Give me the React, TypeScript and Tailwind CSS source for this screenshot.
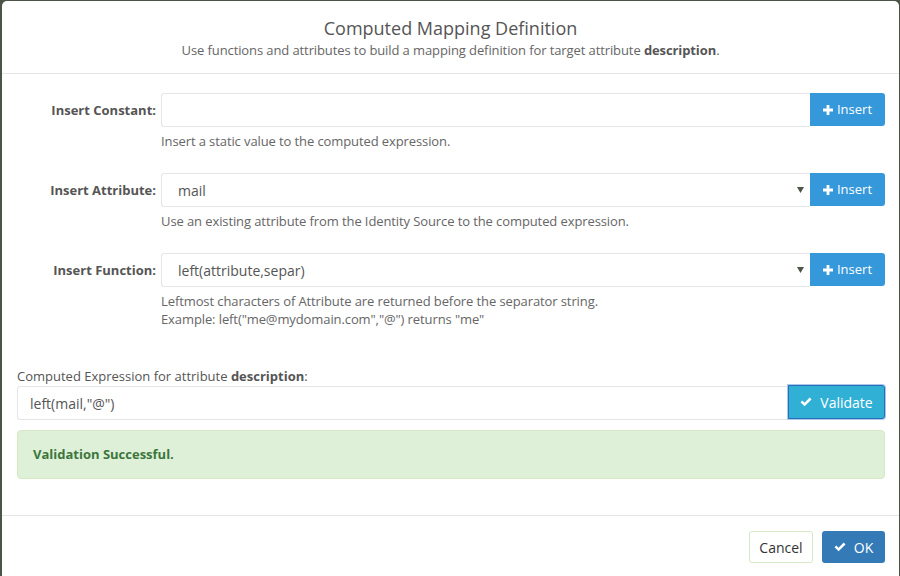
import React from "react";

const font = { fontFamily: '"Open Sans", "Liberation Sans", sans-serif' };

function Plus() {
  return (
    <svg width="10" height="10" viewBox="0 0 10 10" className="inline-block">
      <path d="M3.6 0h2.8v3.6H10v2.8H6.4V10H3.6V6.4H0V3.6h3.6z" fill="#fff" />
    </svg>
  );
}

function Check() {
  return (
    <svg width="12" height="10" viewBox="0 0 12 10" className="inline-block">
      <path d="M0.5 5.2 2.3 3.4 4.6 5.7 9.7 0.6 11.5 2.4 4.6 9.3z" fill="#fff" />
    </svg>
  );
}

function Arrow() {
  return (
    <svg width="7" height="6" viewBox="0 0 7 6">
      <path d="M0 0h7L3.5 6z" fill="#4a5646" />
    </svg>
  );
}

function InsertButton() {
  return (
    <button className="flex h-[33px] w-[75px] items-center justify-center gap-[4px] rounded-r-[3px] bg-[#3498db] text-[13px] text-white">
      <Plus />
      <span>Insert</span>
    </button>
  );
}

function Row({
  label,
  value,
  select,
  help,
}: {
  label: string;
  value?: string;
  select?: boolean;
  help: React.ReactNode;
}) {
  return (
    <div className="flex">
      <div className="w-[144px] pt-[8px] pr-[5px] text-right text-[13px] font-bold text-[#555]">
        {label}
      </div>
      <div className="flex-1">
        <div className="flex">
          <div className="flex h-[34px] flex-1 items-center justify-between rounded-l-[3px] border border-r-0 border-[#e6e6e6] pl-[16px] pr-[6px] text-[14px] text-[#555]">
            <span>{value}</span>
            {select && <Arrow />}
          </div>
          <InsertButton />
        </div>
        <div className="mt-[5px] text-[13px] leading-[18px] tracking-[-0.1px] text-[#666]">{help}</div>
      </div>
    </div>
  );
}

export default function App() {
  return (
    <div className="h-[576px] w-[900px] overflow-hidden bg-[#4b5447] pl-[2px] pt-[1px]" style={font}>
      <div className="h-[600px] w-[897px] rounded-[5px] bg-white">
        <div className="flex h-[73px] flex-col items-center border-b border-[#e5e5e5] pt-[15px]">
          <div className="text-[18px] leading-[24px] text-[#555]">Computed Mapping Definition</div>
          <div className="mt-[1px] text-[13px] leading-[18px] tracking-[-0.1px] text-[#666]">
            Use functions and attributes to build a mapping definition for target attribute{" "}
            <b className="text-[#555]">description</b>.
          </div>
        </div>
        <div className="pl-[15px] pr-[14px] pt-[19px]">
          <div className="flex flex-col gap-[23px]">
            <Row label="Insert Constant:" help="Insert a static value to the computed expression." />
            <Row
              label="Insert Attribute:"
              value="mail"
              select
              help="Use an existing attribute from the Identity Source to the computed expression."
            />
            <Row
              label="Insert Function:"
              value="left(attribute,separ)"
              select
              help={
                <>
                  <div>Leftmost characters of Attribute are returned before the separator string.</div>
                  <div>Example: left("me@mydomain.com","@") returns "me"</div>
                </>
              }
            />
          </div>
          <div className="mt-[39px] text-[13px] leading-[18px] text-[#555]">
            Computed Expression for attribute <b>description</b>:
          </div>
          <div className="mt-[1px] flex">
            <div className="flex h-[34px] flex-1 items-center rounded-l-[3px] border border-r-0 border-[#e6e6e6] pl-[12px] text-[14px] text-[#555]">
              left(mail,"@")
            </div>
            <button className="flex h-[34px] w-[97px] -translate-y-[1px] items-center justify-center gap-[8px] rounded-r-[3px] border border-[#2a6cb6] bg-[#31b0d5] text-[14px] text-white shadow-[0_0_0_1px_#a9c8f0]">
              <Check />
              <span>Validate</span>
            </button>
          </div>
          <div className="mt-[10px] flex h-[49px] items-center rounded-[4px] border border-[#d6e9c6] bg-[#dff0d8] pl-[15px] text-[13px] font-bold text-[#3c763d]">
            Validation Successful.
          </div>
        </div>
        <div className="mt-[36px] flex justify-end gap-[9px] border-t border-[#e5e5e5] pr-[14px] pt-[15px]">
          <button className="h-[32px] w-[64px] rounded-[3px] border border-[#d6e9c6] bg-white text-[14px] text-[#333]">
            Cancel
          </button>
          <button className="flex h-[32px] w-[63px] items-center justify-center gap-[8px] rounded-[3px] bg-[#337ab7] text-[14px] text-white">
            <Check />
            <span>OK</span>
          </button>
        </div>
      </div>
    </div>
  );
}
